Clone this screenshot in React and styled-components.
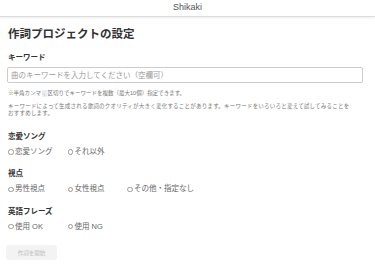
import styled, { createGlobalStyle } from 'styled-components'

const GlobalStyle = createGlobalStyle`
  html, body {
    margin: 0;
    padding: 0;
    background: #ffffff;
  }
  body {
    font-family: 'Liberation Sans', 'Noto Sans CJK JP', sans-serif;
    color: #333333;
  }
`

const sections = [
  { title: '恋愛ソング', options: ['恋愛ソング', 'それ以外'] },
  { title: '視点', options: ['男性視点', '女性視点', 'その他・指定なし'] },
  { title: '英語フレーズ', options: ['使用 OK', '使用 NG'] },
]

/*---> Component <---*/
export default function App() {
  return (
    <>
      <GlobalStyle />
      <Header>Shikaki</Header>
      <Main>
        <Title>作詞プロジェクトの設定</Title>

        <KeywordLabel>キーワード</KeywordLabel>
        <Input placeholder="曲のキーワードを入力してください（空欄可）" />
        <Note>
          ※半角カンマ<Comma>,</Comma>区切りでキーワードを複数（最大10個）指定できます。
        </Note>
        <Note $wide>
          キーワードによって生成される歌詞のクオリティが大きく変化することがあります。キーワードをいろいろと変えて試してみることを
          <br />
          おすすめします。
        </Note>

        <Sections>
          {sections.map((section) => (
            <Section key={section.title}>
              <Label>{section.title}</Label>
              <RadioRow>
                {section.options.map((option) => (
                  <RadioItem key={option}>
                    <Circle />
                    {option}
                  </RadioItem>
                ))}
              </RadioRow>
            </Section>
          ))}
        </Sections>

        <StartButton disabled>作詞を開始</StartButton>
      </Main>
    </>
  )
}

/*---> Styles <---*/
const Header = styled.header`
  height: 16px;
  line-height: 15px;
  text-align: center;
  font-size: 9px;
  color: #555555;
  border-bottom: 1px solid #dddddd;
  box-shadow: 0 1px 2px rgba(0, 0, 0, 0.08);
`

const Main = styled.main`
  display: flex;
  flex-direction: column;
  align-items: flex-start;
  padding: 0 12px 0 8px;
`

const Title = styled.h1`
  margin: 9px 0 0;
  font-size: 11.5px;
  line-height: 16px;
  font-weight: 700;
  color: #333333;
`

const Label = styled.div`
  font-size: 7.5px;
  line-height: 10px;
  font-weight: 700;
  color: #333333;
`

const KeywordLabel = styled(Label)`
  margin-top: 11px;
`

const Input = styled.input`
  display: block;
  box-sizing: border-box;
  width: calc(100% + 1px);
  height: 16px;
  margin: 4px 0 0 -1px;
  padding: 0 3px;
  border: 1px solid #cccccc;
  border-radius: 2px;
  font-family: inherit;
  font-size: 7.5px;
  color: #333333;
  outline: none;

  &::placeholder {
    color: #999999;
  }
`

const Note = styled.p`
  margin: ${(p) => (p.$wide ? '6.5px' : '7px')} 0 0;
  font-size: 5.5px;
  line-height: 6.5px;
  letter-spacing: ${(p) => (p.$wide ? '0.22px' : '0')};
  white-space: nowrap;
  color: #777777;
`

const Comma = styled.span`
  display: inline-block;
  margin: 0 1px;
  padding: 0 1.5px;
  background: #e8eef5;
  border-radius: 1px;
`

const Sections = styled.div`
  display: flex;
  flex-direction: column;
  gap: 12.2px;
  margin-top: 16.2px;
`

const Section = styled.section`
  display: flex;
  flex-direction: column;
  gap: 5px;
`

const RadioRow = styled.div`
  display: flex;
`

const RadioItem = styled.label`
  display: flex;
  align-items: center;
  min-width: 59.5px;
  font-size: 7.5px;
  line-height: 10px;
  color: #666666;
`

const Circle = styled.span`
  box-sizing: border-box;
  width: 5.5px;
  height: 5.5px;
  margin-right: 1.5px;
  border: 0.6px solid #999999;
  border-radius: 50%;
`

const StartButton = styled.button`
  display: block;
  width: 51px;
  height: 15px;
  margin: 13.9px 0 0 -2px;
  padding: 0;
  border: none;
  border-radius: 3px;
  background: #f3f3f3;
  font-family: inherit;
  font-size: 5.5px;
  color: #bbbbbb;
`
